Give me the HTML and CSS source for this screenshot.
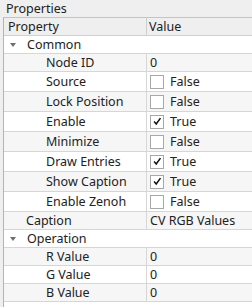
FILE: index.html
```html
<!DOCTYPE html>
<html>
<head>
<meta charset="utf-8">
<link rel="stylesheet" href="styles.css">
</head>
<body>
<div class="title">Properties</div>
<div class="table">
  <div class="row header"><div class="cell name">Property</div><div class="cell value">Value</div></div>
  <div class="row cat"><div class="cell name"><span class="arrow"></span>Common</div></div>
  <div class="row alt"><div class="cell name child">Node ID</div><div class="cell value">0</div></div>
  <div class="row tall"><div class="cell name child">Source</div><div class="cell value"><span class="box"></span>False</div></div>
  <div class="row tall alt"><div class="cell name child">Lock Position</div><div class="cell value"><span class="box"></span>False</div></div>
  <div class="row tall"><div class="cell name child">Enable</div><div class="cell value"><span class="box"><svg viewBox="0 0 13 13" width="11" height="11"><path d="M2.5 6.5 L5 9.5 L10 2.5" fill="none" stroke="#111" stroke-width="1.8"/></svg></span>True</div></div>
  <div class="row tall alt"><div class="cell name child">Minimize</div><div class="cell value"><span class="box"></span>False</div></div>
  <div class="row tall"><div class="cell name child">Draw Entries</div><div class="cell value"><span class="box"><svg viewBox="0 0 13 13" width="11" height="11"><path d="M2.5 6.5 L5 9.5 L10 2.5" fill="none" stroke="#111" stroke-width="1.8"/></svg></span>True</div></div>
  <div class="row tall alt"><div class="cell name child">Show Caption</div><div class="cell value"><span class="box"><svg viewBox="0 0 13 13" width="11" height="11"><path d="M2.5 6.5 L5 9.5 L10 2.5" fill="none" stroke="#111" stroke-width="1.8"/></svg></span>True</div></div>
  <div class="row tall"><div class="cell name child">Enable Zenoh</div><div class="cell value"><span class="box"></span>False</div></div>
  <div class="row alt"><div class="cell name top">Caption</div><div class="cell value">CV RGB Values</div></div>
  <div class="row cat"><div class="cell name"><span class="arrow"></span>Operation</div></div>
  <div class="row alt"><div class="cell name child">R Value</div><div class="cell value">0</div></div>
  <div class="row"><div class="cell name child">G Value</div><div class="cell value">0</div></div>
  <div class="row alt"><div class="cell name child">B Value</div><div class="cell value">0</div></div>
</div>
</body>
</html>
```
FILE: styles.css
```css
html, body {
  margin: 0;
  height: 100%;
}
body {
  background: #efefef;
  font-family: "Noto Sans", "DejaVu Sans", sans-serif;
  font-size: 12.5px;
  color: #222;
  display: flex;
  flex-direction: column;
  overflow: hidden;
}
.title {
  height: 17px;
  line-height: 17px;
  padding-left: 6px;
  flex: none;
}
.table {
  flex: 1;
  margin-left: 3px;
  background: #fff;
  border-left: 1px solid #b4b4b4;
  border-top: 1px solid #c4c4c4;
}
.row {
  display: grid;
  grid-template-columns: 143px 1fr;
  height: 17px;
  border-bottom: 1px solid #d6d6d6;
  background: #fff;
}
.row.tall {
  height: 19px;
}
.row.alt {
  background: #f6f6f6;
}
.row.header {
  background: #efefef;
  border-bottom-color: #cfcfcf;
}
.cell {
  display: flex;
  align-items: center;
  white-space: nowrap;
  overflow: hidden;
}
.name {
  border-right: 1px solid #d6d6d6;
  padding-left: 2px;
}
.header .name {
  border-right-color: #cfcfcf;
  padding-left: 4px;
}
.cat .name {
  border-right: none;
  grid-column: 1 / 3;
  padding-left: 6px;
}
.name.child {
  padding-left: 42px;
}
.name.top {
  padding-left: 22px;
}
.value {
  padding-left: 3px;
}
.header .value {
  padding-left: 2px;
}
.arrow {
  width: 0;
  height: 0;
  border-left: 3px solid transparent;
  border-right: 3px solid transparent;
  border-top: 4px solid #6e6e6e;
  margin-right: 11px;
}
.box {
  box-sizing: border-box;
  width: 14px;
  height: 14px;
  border: 1px solid #a8a8a8;
  background: #fff;
  margin-right: 6px;
  display: flex;
  align-items: center;
  justify-content: center;
}
.box svg {
  display: block;
}
```
